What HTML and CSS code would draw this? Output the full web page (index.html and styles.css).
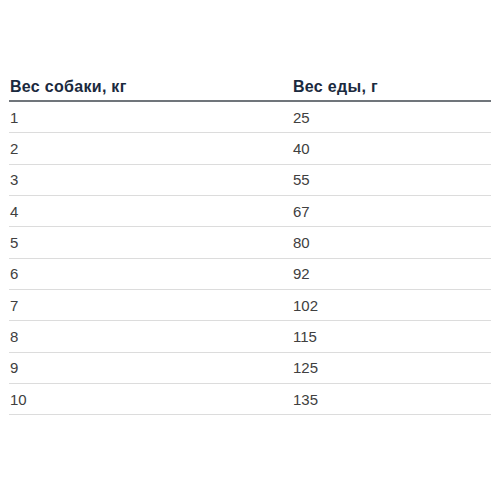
FILE: index.html
```html
<!DOCTYPE html>
<html lang="ru">
<head>
<meta charset="utf-8">
<link rel="stylesheet" href="styles.css">
</head>
<body>
<div class="table">
  <div class="row head"><div class="c1">Вес собаки, кг</div><div class="c2">Вес еды, г</div></div>
  <div class="row"><div class="c1">1</div><div class="c2">25</div></div>
  <div class="row"><div class="c1">2</div><div class="c2">40</div></div>
  <div class="row"><div class="c1">3</div><div class="c2">55</div></div>
  <div class="row"><div class="c1">4</div><div class="c2">67</div></div>
  <div class="row"><div class="c1">5</div><div class="c2">80</div></div>
  <div class="row"><div class="c1">6</div><div class="c2">92</div></div>
  <div class="row"><div class="c1">7</div><div class="c2">102</div></div>
  <div class="row"><div class="c1">8</div><div class="c2">115</div></div>
  <div class="row"><div class="c1">9</div><div class="c2">125</div></div>
  <div class="row"><div class="c1">10</div><div class="c2">135</div></div>
</div>
</body>
</html>
```
FILE: styles.css
```css
html, body { margin: 0; padding: 0; background: #fff; }
body { font-family: "Liberation Sans", Arial, sans-serif; font-size: 15px; color: #404040; }
.table { margin: 0 9px; padding-top: 78px; width: 482px; }
.row { display: flex; align-items: center; height: 30.333px; border-bottom: 1px solid #dcdcdc; line-height: 17px; }
.c1 { width: 283px; padding-left: 1px; }
.c2 { flex: 1; }
.row.head { height: auto; padding-bottom: 5px; border-bottom: 2px solid #70757b; font-weight: bold; color: #1b2a3e; font-size: 16px; letter-spacing: 0.3px; align-items: flex-start; }
```
